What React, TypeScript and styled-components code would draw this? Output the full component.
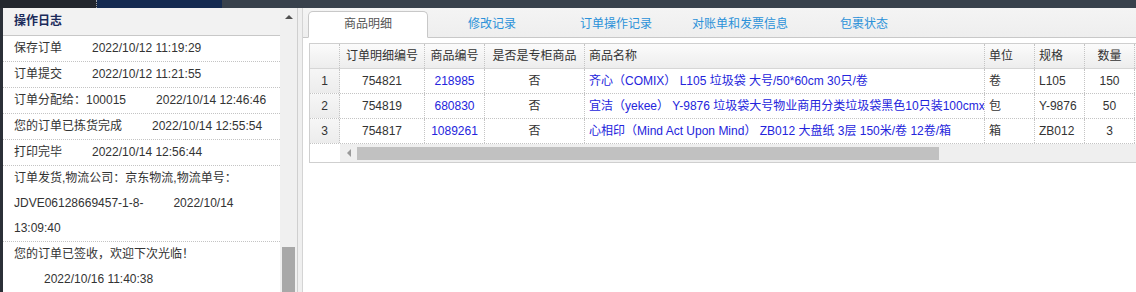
import styled, { createGlobalStyle } from "styled-components"

const GlobalStyle = createGlobalStyle`
  html, body {
    margin: 0;
    padding: 0;
    overflow: hidden;
    background: #fff;
  }
  body {
    font-family: "Liberation Sans", "Noto Sans CJK SC", sans-serif;
    font-size: 12px;
    color: #333;
  }
  * { box-sizing: border-box; }
`

const Page = styled.div`
  width: 100%;
  height: 292px;
  display: flex;
  flex-direction: column;
  overflow: hidden;
`

const TopBar = styled.div`
  height: 8px;
  display: flex;
  flex-shrink: 0;
`

const TopSegment = styled.div<{ $bg: string; $w?: number; $dotted?: boolean }>`
  background: ${p => p.$bg};
  width: ${p => (p.$w ? `${p.$w}px` : "auto")};
  flex: ${p => (p.$w ? "none" : "1")};
  border-right: ${p => (p.$dotted ? "1px dotted #9aa0aa" : "none")};
`

const Main = styled.div`
  flex: 1;
  min-height: 0;
  display: flex;
  background: #efefef;
  border-left: 3px solid #2b3038;
`

const LogPanel = styled.div`
  width: 295px;
  display: flex;
  border-right: 1px solid #cfcfcf;
  flex-shrink: 0;
`

const LogBody = styled.div`
  flex: 1;
  overflow: hidden;
  background: #fff;
`

const LogHeader = styled.div`
  height: 28px;
  line-height: 27px;
  padding-left: 11px;
  background: #f2f2f2;
  border-bottom: 1px solid #c8c8c8;
  font-weight: bold;
  color: #1b2b5b;
`

const LogRow = styled.div`
  padding: 0 10px 0 11px;
  line-height: 25px;
  border-bottom: 1px dotted #c4c4c4;
`

const LogTime = styled.span`
  padding-left: 30px;
`

const VScroll = styled.div`
  width: 17px;
  background: #f0f0f0;
  display: flex;
  flex-direction: column;
  justify-content: space-between;
  align-items: center;
`

const UpArrow = styled.div`
  margin-top: 7px;
  width: 0;
  height: 0;
  border-left: 4px solid transparent;
  border-right: 4px solid transparent;
  border-bottom: 4px solid #505050;
`

const VThumb = styled.div`
  width: 13px;
  height: 45px;
  background: #a8a8a8;
`

const RightPanel = styled.div`
  flex: 1;
  min-width: 0;
  margin-left: 4px;
  border-left: 1px solid #d4d4d4;
  background: #fff;
  display: flex;
  flex-direction: column;
  overflow: hidden;
`

const TabStrip = styled.div`
  height: 30px;
  flex-shrink: 0;
  display: flex;
  gap: 4px;
  padding: 3px 0 0 5px;
  background: linear-gradient(#f4f4f4, #eeeeee);
  border-bottom: 1px solid #c8c8c8;
`

const Tab = styled.div<{ $active?: boolean }>`
  width: 120px;
  height: 27px;
  margin-bottom: -1px;
  line-height: 25px;
  text-align: center;
  color: ${p => (p.$active ? "#555" : "#2b91d9")};
  background: ${p => (p.$active ? "#fff" : "transparent")};
  border: 1px solid ${p => (p.$active ? "#c8c8c8" : "transparent")};
  border-bottom-color: ${p => (p.$active ? "#fff" : "transparent")};
  border-radius: 5px 5px 0 0;
`

const Content = styled.div`
  padding: 5px 0 0 6px;
`

const Grid = styled.div`
  width: 1000px;
  border: 1px solid #cfcfcf;
  border-right: none;
`

const Row = styled.div<{ $head?: boolean }>`
  display: flex;
  height: 25px;
  border-bottom: ${p => (p.$head ? "1px solid #d6d6d6" : "1px dotted #c4c4c4")};
  background: ${p => (p.$head ? "linear-gradient(#fbfbfb, #ededed)" : "#fff")};
`

const Cell = styled.div<{ $w: number; $align: string; $link?: boolean; $index?: boolean }>`
  width: ${p => p.$w}px;
  flex-shrink: 0;
  line-height: 24px;
  padding: 0 4px;
  text-align: ${p => p.$align};
  white-space: nowrap;
  overflow: hidden;
  color: ${p => (p.$link ? "#2424dc" : "#333")};
  border-right: 1px dotted #c4c4c4;
  background: ${p => (p.$index ? "linear-gradient(#f6f6f6, #ececec)" : "transparent")};
`

const ScrollRow = styled.div`
  display: flex;
  height: 18px;
`

const ScrollCorner = styled.div`
  width: 30px;
  background: #fff;
`

const HTrack = styled.div`
  flex: 1;
  display: flex;
  align-items: flex-start;
  background: #efefef;
`

const LeftArrowBox = styled.div`
  width: 17px;
  height: 18px;
  display: flex;
  align-items: center;
  justify-content: center;
`

const LeftArrow = styled.div`
  width: 0;
  height: 0;
  border-top: 4px solid transparent;
  border-bottom: 4px solid transparent;
  border-right: 4px solid #9a9a9a;
`

const HThumb = styled.div`
  margin-top: 3px;
  width: 582px;
  height: 13px;
  background: #c1c1c1;
`

const logs = [
  { text: "保存订单", time: "2022/10/12 11:19:29" },
  { text: "订单提交", time: "2022/10/12 11:21:55" },
  { text: "订单分配给：100015", time: "2022/10/14 12:46:46" },
  { text: "您的订单已拣货完成", time: "2022/10/14 12:55:54" },
  { text: "打印完毕", time: "2022/10/14 12:56:44" },
  { text: "订单发货,物流公司：京东物流,物流单号：JDVE06128669457-1-8-", time: "2022/10/14 13:09:40" },
  { text: "您的订单已签收，欢迎下次光临！", time: "2022/10/16 11:40:38" },
]

const tabs = ["商品明细", "修改记录", "订单操作记录", "对账单和发票信息", "包裹状态"]

const columns = [
  { title: "", w: 30, align: "center" },
  { title: "订单明细编号", w: 85, align: "center" },
  { title: "商品编号", w: 60, align: "center" },
  { title: "是否是专柜商品", w: 100, align: "center" },
  { title: "商品名称", w: 400, align: "left" },
  { title: "单位", w: 50, align: "left" },
  { title: "规格", w: 50, align: "left" },
  { title: "数量", w: 50, align: "center" },
  { title: "单价", w: 80, align: "center" },
]

const items = [
  ["1", "754821", "218985", "否", "齐心（COMIX） L105 垃圾袋 大号/50*60cm 30只/卷", "卷", "L105", "150", ""],
  ["2", "754819", "680830", "否", "宜洁（yekee） Y-9876 垃圾袋大号物业商用分类垃圾袋黑色10只装100cmx120cm", "包", "Y-9876", "50", ""],
  ["3", "754817", "1089261", "否", "心相印（Mind Act Upon Mind） ZB012 大盘纸 3层 150米/卷 12卷/箱", "箱", "ZB012", "3", ""],
]

const linkCols = [2, 4]

export default function App() {
  return (
    <Page>
      <GlobalStyle />
      <TopBar>
        <TopSegment $bg="#23272e" $w={97} $dotted />
        <TopSegment $bg="#142a50" $w={125} />
        <TopSegment $bg="#38414c" />
      </TopBar>
      <Main>
        <LogPanel>
          <LogBody>
            <LogHeader>操作日志</LogHeader>
            {logs.map((log, i) => (
              <LogRow key={i}>
                {log.text}
                {"\u200b"}
                <LogTime>{log.time}</LogTime>
              </LogRow>
            ))}
          </LogBody>
          <VScroll>
            <UpArrow />
            <VThumb />
          </VScroll>
        </LogPanel>
        <RightPanel>
          <TabStrip>
            {tabs.map((t, i) => (
              <Tab key={t} $active={i === 0}>{t}</Tab>
            ))}
          </TabStrip>
          <Content>
            <Grid>
              <Row $head>
                {columns.map((c, i) => (
                  <Cell key={i} $w={c.w} $align={c.align}>{c.title}</Cell>
                ))}
              </Row>
              {items.map((row, r) => (
                <Row key={r}>
                  {row.map((v, i) => (
                    <Cell
                      key={i}
                      $w={columns[i].w}
                      $align={columns[i].align}
                      $link={linkCols.includes(i)}
                      $index={i === 0}
                    >
                      {v}
                    </Cell>
                  ))}
                </Row>
              ))}
              <ScrollRow>
                <ScrollCorner />
                <HTrack>
                  <LeftArrowBox>
                    <LeftArrow />
                  </LeftArrowBox>
                  <HThumb />
                </HTrack>
              </ScrollRow>
            </Grid>
          </Content>
        </RightPanel>
      </Main>
    </Page>
  )
}
